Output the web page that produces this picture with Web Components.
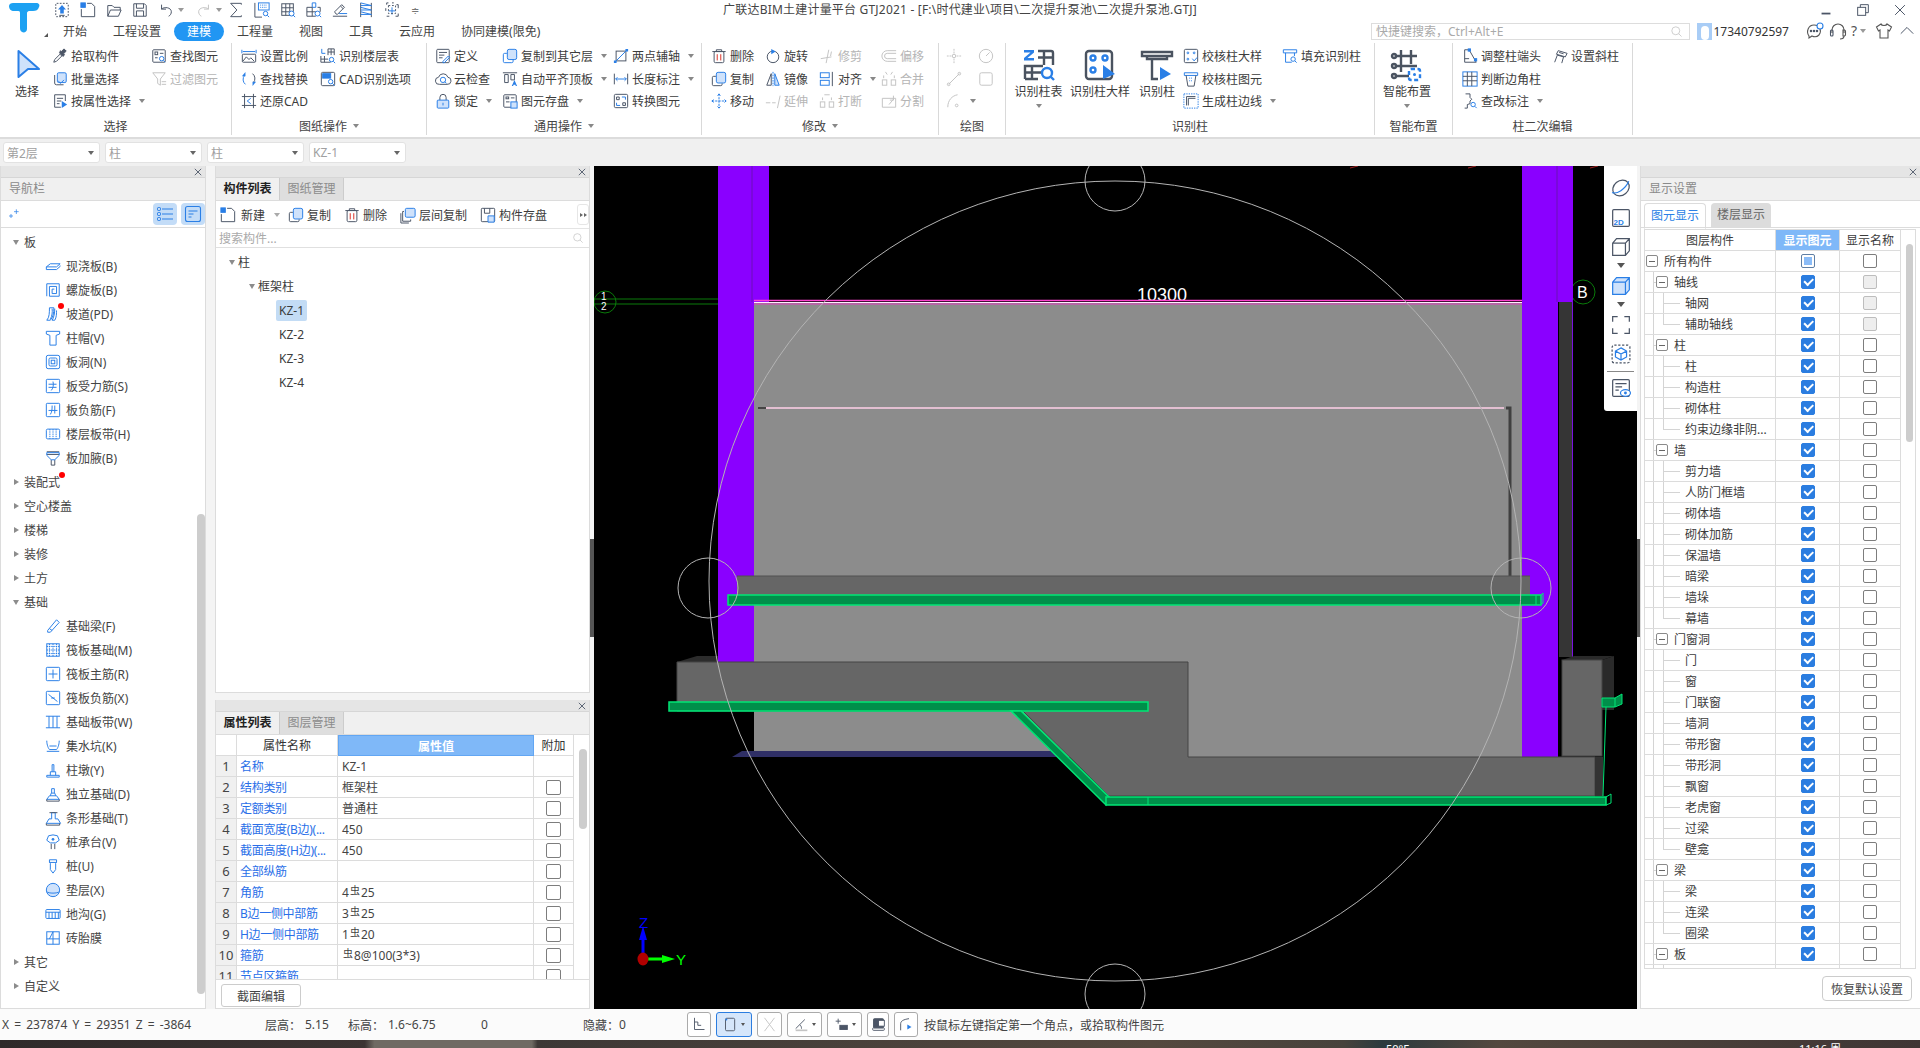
<!DOCTYPE html>
<html lang="zh">
<head>
<meta charset="utf-8">
<title>GTJ2021</title>
<style>
  html, body { margin: 0; height: 100%; overflow: hidden; background: #f0f0f0; }
  body { font: 12px "Noto Sans", "Noto Sans CJK SC", sans-serif; color: #3c3c3c; }
</style>
</head>
<body>
<gtj-app></gtj-app>
<script>
// icon table, all drawn on a 18 box unless a size is passed
const ICONS = {
  pick: '<path d="M2 16l1-3 6-6 2 2-6 6z"/><path class="k" d="M8.5 5.5l4 4 1.5-2-1-1 3-3-2.500-2.500-3 3-1-1z"/>',
  batch: '<rect class="l" x="6" y="2" width="10" height="11" rx="1.500"/><path d="M3 4.500v9a2 2 0 0 0 2 2h8"/><path class="b" d="M7 11l2.500 3 4-4"/>',
  attr: '<path d="M15 9V2H3v14h7"/><path d="M5.500 6h7M5.500 9h5M5.500 12h3"/><path class="f" d="M11 9l6 4-6 4z"/>',
  find: '<rect x="2" y="2" width="14" height="14" rx="1"/><rect x="4.500" y="4.500" width="3" height="3"/><path d="M10 6h4M4.500 11h3"/><circle class="b" cx="12" cy="12" r="2.500"/><path class="b" d="M14 14l2 2"/>',
  filter: '<path class="g" d="M2 2h14l-5.500 7v7l-3-2V9z"/><path class="g" d="M12 12h5M12 15h5"/>',
  scale: '<path class="b" d="M1 2v4M17 2v4M2 4h14"/><rect x="1.500" y="7" width="15" height="9" rx="1"/><path d="M2 15l4-5 3 3 2-2 4 4"/>',
  floor: '<path class="b" d="M2 1v5h4"/><path d="M9 1h7v7M12.500 1v7M9 4.500h7M9 1v7M1 9v7h11M1 12.500h8M5 9v7"/><circle class="b" cx="13" cy="13" r="2.500"/><path class="b" d="M15 15l2 2"/>',
  replace: '<path class="b" d="M4 5a7 7 0 0 0 1 10"/><path d="M14 13a7 7 0 0 0-1-10"/><path class="f" d="M5 1v5H1zM13 17v-5h4z"/>',
  cadopt: '<rect x="1.500" y="1.500" width="15" height="15" rx="1.500"/><rect class="fb" x="3" y="3" width="9" height="5"/><circle class="b" cx="12" cy="12" r="2.500"/><path class="b" d="M14 14l2.500 2.500"/>',
  restore: '<path d="M4 1v16M14 1v16M1 4h16M1 14h16"/><path class="b" d="M11 6L7 9l4 3"/>',
  define: '<rect x="2" y="1.500" width="14" height="15" rx="1"/><path d="M4.500 5h9M4.500 8h6M4.500 11h4"/><path class="b" d="M9 15l6-6 1.500 1.500-6 6H9z"/>',
  cloud: '<path d="M5 15a4 4 0 0 1-1-8 5.500 5.500 0 0 1 10.500 0 4 4 0 0 1-1 8z"/><circle class="b" cx="9" cy="10" r="3"/><path class="b" d="M11 12l2 2"/>',
  lock: '<path d="M5.500 8V5a3.500 3.500 0 0 1 7 0v3"/><rect class="l" x="2.500" y="8" width="13" height="9" rx="1"/><path class="b" d="M9 11v3"/>',
  copylayer: '<rect class="l" x="6" y="1.500" width="10.500" height="11.500" rx="2"/><path class="b" d="M5.500 6H3a1.500 1.500 0 0 0-1.500 1.500V15A1.500 1.500 0 0 0 3 16.500h8a1.500 1.500 0 0 0 1.500-1.500v-2"/>',
  aligntop: '<path d="M1 2h16"/><path d="M3 4h4v9H3zM10 4h4v6h-4z"/><path class="f" d="M11 17l3-7 3 7h-1.500l-.5-1.500h-2L12.500 17z"/>',
  savegrid: '<rect x="2" y="2" width="14" height="14" rx="1"/><rect x="4.500" y="4.500" width="3" height="2"/><path d="M10 5.500h4M4.500 10h4"/><rect class="l" x="10" y="10" width="7" height="7"/>',
  twoaxis: '<rect x="3.500" y="3.500" width="11" height="11"/><path class="b" d="M2 16L16 2"/><path class="f" d="M1 14h3v3H1zM14 1h3v3h-3z"/>',
  len: '<path d="M1.500 3v12M16.500 3v12"/><path class="b" d="M3 9h12M5 7L3 9l2 2M13 7l2 2-2 2"/>',
  conv: '<rect x="1.500" y="1.500" width="15" height="15" rx="1.500"/><path d="M4 4.500h3v3H4zM11 11h3v3h-3z"/><path class="b" d="M10 4.500h4v3M8 14H4v-3"/>',
  del: '<path d="M1.500 4h15M6 4V2h6v2"/><rect x="3.500" y="4" width="11" height="12.500" rx="1.500"/><path class="r" d="M7 7v7M11 7v7"/>',
  rotate: '<circle cx="9" cy="10" r="6.500"/><path class="f" d="M7 1l5 3-5 3z"/>',
  trim: '<path class="g" d="M2 12l12-2M11 2l-3 15M14 4l-1 5"/>',
  offset: '<path class="g" d="M17 3H7a6 6 0 0 0 0 12h10M17 6H7a3 3 0 0 0 0 6h10"/>',
  copy: '<rect class="l" x="6" y="1.500" width="10.500" height="12" rx="2"/><path d="M5.500 6H3a1.500 1.500 0 0 0-1.500 1.500V15A1.500 1.500 0 0 0 3 16.500h8a1.500 1.500 0 0 0 1.500-1.500v-1"/>',
  mirror: '<path d="M7 3L2 16h5z"/><path class="l" d="M11 3l5 13h-5z"/><path class="b" d="M9 1v16" stroke-dasharray="2 1"/>',
  alignb: '<rect class="b" x="1.500" y="2" width="10" height="5.500"/><rect class="b" x="1.500" y="10.500" width="10" height="5.500"/><path d="M15 1v16"/>',
  merge: '<path class="g" d="M3 8V5M15 8V5M5 1l2 3M13 1l-2 3"/><rect class="g" x="1.500" y="10" width="5" height="6"/><rect class="g" x="11.500" y="10" width="5" height="6"/>',
  move: '<path class="b" d="M9 1v16M1 9h16M9 1L7 3.500M9 1l2 2.500M9 17l-2-2.500M9 17l2-2.500M1 9l2.500-2M1 9l2.500 2M17 9l-2.500-2M17 9l-2.500 2" stroke-dasharray="2.500 1.200"/>',
  extend: '<path class="g" d="M1 11h5M8 11h4M17 3l-3 14"/>',
  breakk: '<rect class="g" x="1.500" y="10" width="5" height="6"/><rect class="g" x="11.500" y="10" width="5" height="6"/><path class="g" d="M4 8V5M14 8V5M6 2h6"/>',
  split: '<path class="g" d="M1.500 6v10h15V6zM9 13l5-6M14 3v5h-4"/>',
  dpoint: '<circle class="g" cx="9" cy="9" r="2"/><path class="g" d="M9 1v5M9 12v5M1 9h5M12 9h5" stroke-dasharray="2 1"/>',
  dcircle: '<circle class="g" cx="9" cy="9" r="7.500"/><path class="g" d="M9 9l4-4"/>',
  dline: '<path class="g" d="M3 15L15 3"/><circle class="g" cx="3" cy="15" r="1.500"/><circle class="g" cx="15" cy="3" r="1.500"/>',
  drect: '<rect class="g" x="2" y="2" width="14" height="14" rx="2"/>',
  darc: '<path class="g" d="M2 16C2 8 7 3 13 2"/><circle class="g" cx="12" cy="14" r="1.500"/>',
  colcheck: '<rect x="1.500" y="1.500" width="15" height="15" rx="1.500"/><circle class="b" cx="5.500" cy="5.500" r="1"/><circle class="b" cx="12.500" cy="5.500" r="1"/><circle class="b" cx="5.500" cy="12.500" r="1"/><path class="b" d="M10.500 12l2 2.500 3.500-4"/>',
  colelem: '<path class="b" d="M1.500 2h15v3h-15z"/><path d="M3.500 5l2 12h7l2-12"/><path class="b" d="M7 8h4M7 11h4" stroke-dasharray="1 1"/>',
  coledge: '<rect class="b" x="1" y="1" width="16" height="16" stroke-dasharray="1.500 1.200"/><path d="M4 14V4h10M6 14V6h8"/>',
  fill: '<path class="b" d="M1.500 2h15v3.500h-15zM4 5.500V16h7"/><path class="b" d="M14 5.500V9"/><circle class="b" cx="12.500" cy="12.500" r="2.500"/><path class="b" d="M14.500 14.500l2 2"/>',
  adjust: '<path d="M3 16V2h5l8 14z"/><path d="M3 12h5"/><rect class="fb" x="7" y="1" width="2.500" height="2.500"/><rect class="fb" x="14" y="12" width="2.500" height="2.500"/>',
  slant: '<path d="M3 16l3-8 7 2-2 7M7 3l10 3-2 4-10-3z"/><path d="M8 5l5 1.500"/>',
  judge: '<rect class="b" x="1" y="1" width="16" height="16"/><path d="M1 6h16M1 11h16M6 1v16M11 1v16"/>',
  review: '<path d="M4 1h5v4l2 2-2 2v3l-3 1 0 4H3"/><circle class="b" cx="12.500" cy="13" r="2.500"/><path class="b" d="M14.500 15l2 2"/>',
  // nav
  slab: '<path class="b" d="M1.500 10L6 6.500h11L13 10zM1.500 10v3H13l4-3.500v-1"/>',
  spiral: '<path class="b" d="M2 16V2h14v14H5V5h8v8H8V8h2.500"/>',
  ramp: '<path class="b" d="M5 2h5c0 6-1 11-4 14H2c3-3 3-9 3-14zM8 3c.5 4 0 8-2 12M11 3c0 5-1 10-3 13h3c2-3 2-8 2-11"/>',
  cap: '<path class="b" d="M1.500 1.500h15v3l-4 1.500v11H5.500V6l-4-1.500z"/>',
  hole: '<rect class="b" x="1.500" y="1.500" width="15" height="15" rx="2"/><rect class="b" x="4.500" y="4.500" width="9" height="9" rx="1.500"/><rect class="b" x="7" y="7" width="4" height="4"/>',
  bar: '<rect class="b" x="1.500" y="1.500" width="15" height="15" rx="1"/><path class="b" d="M4 7h9M4 10.500h9M9 4c1 4 0 8-2 10"/>',
  negbar: '<rect class="b" x="1.500" y="1.500" width="15" height="15" rx="1"/><path class="b" d="M4 9.500h10M8 4c0 4 0 7-2 10M11 4v9"/>',
  strip: '<rect class="b" x="1.500" y="3.500" width="15" height="11" rx="1.500"/><path class="b" d="M5.500 3.500v11M12.500 3.500v11M9 3.500v11" stroke-dasharray="1.500 1"/>',
  haunch: '<path d="M2 2h14M2 5h14M7 11v6M11 11v6M7 17h4"/><path class="b" d="M2 3h14v3l-5 5H7L2 6z"/>',
  beam: '<path class="b" d="M3 14L13 2l3 3L6 16H3z"/><path class="b" d="M5 12l3 2"/>',
  raft: '<rect class="b" x="2" y="2" width="14" height="14"/><path class="b" d="M5 2v14M9 2v14M13 2v14M2 5h14M2 9h14M2 13h14" stroke-dasharray="1.500 1"/>',
  raftm: '<rect class="b" x="1.500" y="1.500" width="15" height="15" rx="1"/><path class="b" d="M9 4v10M4 9h10"/>',
  raftn: '<rect class="b" x="1.500" y="1.500" width="15" height="15" rx="1"/><path class="b" d="M4 5l10 8M7 9h4"/>',
  raftb: '<path class="b" d="M1 2.500h16M1 15.500h16M4.500 2.500v13M9 2.500v13M13.500 2.500v13"/>',
  pit: '<path class="b" d="M2 3c0 5 2 9 3 10h8c1-1 3-5 3-10M2 15h14"/><path class="b" d="M5 9h8"/>',
  pier: '<path class="b" d="M2 15h14v2H2zM6 15v-4h6v4M8 11V3h2v8"/>',
  ftg: '<path class="b" d="M2 15l3-4h8l3 4zM6 11l1-3h4l1 3M7.500 8V3h3v5"/><path d="M2 15v2h14v-2"/>',
  stripf: '<path class="b" d="M1.500 15l3-5h3V3h4v7h3l3 5z"/><path d="M1.500 15v2h15v-2M5 3h9"/>',
  pcap: '<path class="b" d="M4 2l5-1 5 1 2 5-4 3H6L2 7z"/><path d="M7 11v6M11 11v6"/><circle class="f" cx="9" cy="6" r="1.500"/>',
  pile: '<path class="b" d="M5 2h8v3l-1 1v7l-3 4-3-4V6L5 5zM5 5h8"/>',
  cush: '<ellipse class="l" cx="9" cy="9" rx="7.500" ry="7.500"/><path class="b" d="M2 11c2 2 12 2 14 0"/>',
  trench: '<rect class="b" x="1" y="4" width="16" height="10" rx="1"/><path class="b" d="M1 7h16M4.500 7v7M8 7v7M11.500 7v7M15 7v7"/>',
  brick: '<rect class="b" x="2" y="2" width="14" height="14"/><path class="b" d="M9 2v14M2 10h14M5 10l4-8"/>',
  // list toolbar
  newf: '<rect class="fb" x="1" y="1" width="5" height="5"/><path d="M1.500 8v8.500h15V5l-3.500-3.500H8"/>',
  levcopy: '<rect class="l" x="6" y="1.500" width="11" height="10" rx="1.500"/><path d="M4.500 5H3v11h9v-2M1 7v11h9"/>',
  listsave: '<rect x="1.500" y="1.500" width="15" height="15" rx="1"/><path d="M5 1.500V7h6V1.500"/><path class="l" d="M9 10h7v7H9z"/>',
  // side tools
  orbit: '<ellipse cx="9" cy="9" rx="6.500" ry="8" transform="rotate(50 9 9)"/><path class="b" d="M1 13c4 2 12-3 15-10"/>',
  two: '<rect x="1.500" y="1.500" width="15" height="15" rx="1"/>',
  cube: '<path d="M1.500 5.500L5 1.500h11.500v11l-3.500 4H1.500zM1.500 5.500H13v11M13 5.500l3.500-4"/>',
  cubeb: '<path class="l" d="M1.500 5.500L5 1.500h11.500v11l-3.500 4H1.500zM1.500 5.500H13v11M13 5.500l3.500-4"/>',
  frame: '<path d="M1.500 6V1.500H6M12 1.500h4.500V6M16.500 12v4.500H12M6 16.500H1.500V12"/>',
  hexa: '<rect x="1" y="1" width="16" height="16" rx="2" stroke-dasharray="2 1.500"/><path class="b" d="M9 3.500l5 2.800v5.400l-5 2.800-5-2.800V6.300zM4 6.300l5 2.800 5-2.800M9 9.100v5.400"/>',
  listeye: '<rect x="1.500" y="1.500" width="15" height="15" rx="1"/><path d="M4 5h10M4 8h6M4 11h3"/><ellipse class="wb" cx="13" cy="13.500" rx="4.500" ry="3"/><circle class="f" cx="13" cy="13.500" r="1.300"/>',
  // status bar
  s1: '<path d="M3 1v14h12"/><path d="M3 6h4v4h4" />',
  s2: '<rect x="3" y="1.500" width="11" height="15" rx="1.500"/><circle class="f" cx="4" cy="3" r="1.200"/>',
  s3: '<path class="g" d="M3 1l12 16M15 1L3 17"/>',
  s4: '<path d="M2 14L13 3"/><path d="M9 14c0-2-.5-3.500-2-4.500"/><path class="g" d="M2 16h14" stroke-width="2"/>',
  s5: '<path d="M2 5h6M5 2v6"/><rect class="k" x="7" y="10" width="9" height="5"/>',
  s6: '<rect class="k" x="3" y="2" width="12" height="11" rx="1"/><rect x="2" y="13" width="14" height="3" rx="1"/><rect x="9" y="4" width="7" height="7" fill="#fff"/>',
  s7: '<path d="M2 16V8c0-3 3-5 10-6"/><path class="f" d="M10 9l5 3-5 3z"/>',
  // top bar
  up: '<rect x="2" y="1.500" width="14" height="15" rx="1" stroke-dasharray="2 1.500"/><path class="f" d="M9 3.500l4.500 5H11V13H7V8.500H4.500z"/><path d="M6 15h6"/>',
  open: '<path d="M2 16V4h5l2 2h7v3M2 16l3-7h12l-3 7z"/>',
  save: '<path d="M2 2h12l2 2v12H2zM5 2v5h8V2M5 16v-6h8v6"/>',
  undo: '<path d="M4 3v5h5M4 8c3-3 11-2 11 3 0 2-1 4-3 5"/>',
  redo: '<path class="g" d="M14 3v5H9M14 8c-3-3-11-2-11 3 0 2 1 4 3 5"/>',
  sum: '<path d="M15 3V1.500H3L10 9l-7 7.500h12V15"/>',
  q1: '<path d="M1 1v16h8"/><rect class="b" x="5" y="1" width="12" height="8"/><path class="b" d="M7 3.500h8M7 6h8" stroke-dasharray="1 1"/><circle class="b" cx="13" cy="13" r="2.500"/><path class="b" d="M15 15l2 2"/>',
  q2: '<rect x="2" y="2" width="13" height="13"/><path d="M2 6.500h13M2 11h13M6.500 2v13M11 2v13"/><circle class="wb" cx="13" cy="13" r="2.800"/><path class="b" d="M15 15l2 2"/>',
  q3: '<path class="b" d="M7 1h4v5H7z"/><path d="M1 6h6M1 11h14M1 16h10M1 6v10M7 6v10M13 6h3v5"/><circle class="wb" cx="13" cy="13" r="2.800"/><path class="b" d="M15 15l2 2"/>',
  q4: '<path d="M1 16h16"/><path d="M4 13l-1-2L11 3l3 3-8 8zM9.500 4.500l3 3"/><path class="b" d="M8 13h9"/>',
  q5: '<path d="M3 1v16M15 1v16"/><path class="b" d="M3 4h12M3 9h12M3 14h12M3 1l12 3M3 6l12 3M3 11l12 3"/>',
  q6: '<path d="M5 1H3v2M2 7v3M3 16h3M16 7V3h-2M9 1h2" /><path d="M13 16h3v-3"/><path class="b" d="M9 6v8M5 10h8"/><rect x="5" y="4" width="8" height="9" stroke-dasharray="2 2"/>',
  search: '<circle class="g" cx="8" cy="8" r="5.500"/><path class="g" d="M12 12l4 4"/>',
  chat: '<path class="s" d="M3 14C0 10 2 3 8 3c6 0 8 6 5 10-2 2-5 2-7 1l-3 2z"/><circle class="k" cx="5" cy="9" r=".7"/><circle class="k" cx="8" cy="9" r=".7"/><circle class="k" cx="11" cy="9" r=".7"/><circle class="wb" cx="14" cy="4" r="3"/>',
  head: '<path class="s" d="M3 11V8a6 6 0 0 1 12 0v3"/><rect x="1.500" y="8" width="2.500" height="6" rx="1"/><path class="s" d="M14 8h1.500a1.500 1.500 0 0 1 1 1.500v3a1.500 1.500 0 0 1-1 1.500H14zM15 14c0 2-2 3-4 3"/>',
  shirt: '<path class="s" d="M6 2L1.500 5l2 4 1.500-1v8h8V8l1.500 1 2-4L12 2c-.5 2-5.500 2-6 0z"/>',
  chev: '<path d="M2 12l7-7 7 7"/>',
  mini: '<path d="M4 13h10" stroke-width="2"/>',
  rest: '<rect x="3" y="6" width="9" height="9"/><path d="M6 6V3h9v9h-3"/>',
  closex: '<path d="M3.500 3.500l11 11M14.500 3.500l-11 11"/>',
  cross: '<path d="M1 1l8 8M9 1L1 9"/>',
  plus: '<path class="b" d="M3 9v6M0 12h6M11 2v7M7.500 5.500h7"/>',
  listv: '<circle class="wb" cx="3" cy="4" r="1.500"/><circle class="wb" cx="3" cy="9" r="1.500"/><circle class="wb" cx="3" cy="14" r="1.500"/><path class="b" d="M6 4h11M6 9h11M6 14h11"/>',
  listd: '<rect class="b" x="1.500" y="1.500" width="15" height="15" rx="2"/><path class="b" d="M4.500 6h9M4.500 9h5M4.500 12h3"/>',
  // big ones on a 32 box
  bzb: '<path class="f" d="M1 1h10v2.500L4.500 9H11v2.500H1V9l6.500-5.500H1z"/><path class="h" d="M15 2h13a2 2 0 0 1 2 2v12M21 2v14M15 8.500h15M2 30V17h18M2 23.500h16M9 17v13M2 30h13"/><circle class="hb" cx="24" cy="24" r="5"/><path class="hb" d="M27.500 27.500L31 31"/>',
  bcd: '<rect class="h" x="2" y="2" width="26" height="28" rx="3"/><circle class="hb" cx="9" cy="9" r="2.500"/><circle class="hb" cx="21" cy="9" r="2.500"/><circle class="hb" cx="9" cy="21" r="2.500"/><path class="f" d="M19 16l12 9-12 5z"/>',
  bcol: '<path class="h" d="M1 3h30v4H1zM6 7v3h20V7M11 10v20h6"/><path class="f" d="M19 18l11 7-11 6z"/>',
  bgrid: '<path class="h" d="M10 1v22M20 1v14M4 7h22M4 17h22M4 27h14"/><circle class="h" cx="3" cy="7" r="2"/><circle class="h" cx="3" cy="17" r="2"/><circle class="h" cx="3" cy="27" r="2"/><rect class="hb" x="18" y="20" width="11" height="11" rx="2" stroke-dasharray="4 2.500"/><circle class="f" cx="23.500" cy="25.500" r="1.500"/>',
  bsel: '<path class="l" stroke-width="2" d="M7.500 2L28 20H17L7.500 28z" stroke-linejoin="round"/>'
};

class GtjIcon extends HTMLElement {
  connectedCallback() {
    const size = this.getAttribute('size') || 16;
    const box = this.getAttribute('box') || 18;
    this.attachShadow({ mode: 'open' }).innerHTML = `
      <style>
        :host { display: inline-flex; flex: none; width: ${size}px; height: ${size}px; }
        svg { width: 100%; height: 100%; overflow: visible; fill: none; stroke: #4b5566; stroke-width: 1.100; }
        .b { stroke: #2a7fe6; }
        .l { fill: #cfe2fb; stroke: #2a7fe6; }
        .f { fill: #2a7fe6; stroke: none; }
        .fb { fill: #2a7fe6; stroke: #2a7fe6; }
        .g { stroke: #c4c4c4; }
        .r { stroke: #d93025; }
        .k { fill: #4b5566; }
        .s { stroke: #555; }
        .wb { fill: #fff; stroke: #2a7fe6; }
        .h { stroke: #4a5360; stroke-width: 2.400; }
        .hb { stroke: #2a7fe6; stroke-width: 2.400; }
      </style>
      <svg viewBox="0 0 ${box} ${box}">${ICONS[this.getAttribute('name')] || ''}</svg>`;
  }
}
customElements.define('gtj-icon', GtjIcon);

const caret = '<span class="car"></span>';

class RbItem extends HTMLElement {
  connectedCallback() {
    const dim = this.hasAttribute('off');
    this.attachShadow({ mode: 'open' }).innerHTML = `
      <style>
        :host { display: flex; align-items: center; gap: 3px; white-space: nowrap; color: ${dim ? '#b5b5b5' : '#3c3c3c'}; }
        .car { width: 0; height: 0; border: 3px solid transparent; border-top: 4px solid #888; border-bottom: 0; margin-left: 5px; }
      </style>
      <gtj-icon name="${this.getAttribute('icon')}"></gtj-icon><slot></slot>${this.hasAttribute('drop') ? caret : ''}`;
  }
}
customElements.define('rb-item', RbItem);

class RbBig extends HTMLElement {
  connectedCallback() {
    const w = this.getAttribute('w');
    const s = this.getAttribute('s') || 32;
    this.attachShadow({ mode: 'open' }).innerHTML = `
      <style>
        :host { display: flex; flex: none; flex-direction: column; align-items: center; width: ${w}px; white-space: nowrap; }
        .ic { height: 36px; padding-top: 2px; display: flex; align-items: center; }
        .tx { line-height: 17px; }
        .car { width: 0; height: 0; border: 3px solid transparent; border-top: 4px solid #888; border-bottom: 0; margin-top: 4px; }
      </style>
      <div class="ic"><gtj-icon name="${this.getAttribute('icon')}" size="${s}" box="32"></gtj-icon></div>
      <div class="tx"><slot></slot></div>${this.hasAttribute('drop') ? caret : ''}`;
  }
}
customElements.define('rb-big', RbBig);

class RbGroup extends HTMLElement {
  connectedCallback() {
    const cols = this.getAttribute('cols') || 'auto';
    const drop = this.hasAttribute('drop');
    this.attachShadow({ mode: 'open' }).innerHTML = `
      <style>
        :host { display: flex; flex: none; flex-direction: column; box-sizing: border-box; width: ${this.getAttribute('w')}px; height: 92px; margin-top: 2px; border-right: 1px solid #d9d9d9; }
        .body { flex: 1; min-height: 0; display: flex; padding: 2px 0 0 ${this.getAttribute('pad') || 0}px; }
        .cols { display: grid; grid-auto-flow: column; grid-template-rows: repeat(3, 22.500px); grid-template-columns: ${cols}; align-items: center; }
        .lab { flex: none; height: 22px; display: flex; align-items: center; justify-content: center; gap: 6px; margin-bottom: -2px; color: #444; }
        .car { width: 0; height: 0; border: 3.500px solid transparent; border-top: 4px solid #888; border-bottom: 0; }
      </style>
      <div class="body"><slot name="big"></slot><div class="cols"><slot></slot></div></div>
      <div class="lab">${this.getAttribute('label')}${drop ? caret : ''}</div>`;
  }
}
customElements.define('rb-group', RbGroup);

class GtjTitlebar extends HTMLElement {
  connectedCallback() {
    const q = ['up', 'newf', 'open', 'save'];
    const tabs = ['开始', '工程设置', '建模', '工程量', '视图', '工具', '云应用', '协同建模(限免)'];
    this.attachShadow({ mode: 'open' }).innerHTML = `
      <style>
        :host { display: flex; height: 41px; background: #fff; }
        .logo { flex: none; width: 50px; position: relative; }
        .logo svg { display: block; margin: 3px 0 0 8px; }
        .logo i { position: absolute; right: 2px; bottom: 4px; border: 2px solid transparent; border-right-color: #555; border-bottom-color: #555; }
        .col { flex: 1; display: flex; flex-direction: column; min-width: 0; }
        .r1 { height: 21px; display: flex; align-items: flex-start; }
        .quick { flex: none; width: 400px; display: flex; align-items: center; padding: 2px 0 0 4px; box-sizing: border-box; gap: 10px; }
        .t { flex: 1; text-align: center; line-height: 20px; color: #444; white-space: nowrap; letter-spacing: .2px; }
        .win { flex: none; width: 450px; display: flex; justify-content: flex-end; gap: 21px; padding: 2px 12px 0 0; box-sizing: border-box; }
        .d { width: 0; height: 0; border: 3px solid transparent; border-top: 4px solid #999; border-bottom: 0; margin: 0 -4px 0 -6px; }
        .r2 { height: 20px; display: flex; align-items: center; }
        .tab { padding: 0 13px; line-height: 19px; color: #444; white-space: nowrap; }
        .tab.on { background: #2196f3; color: #fff; border-radius: 10px; }
        .sp { flex: 1; }
        .s { flex: none; box-sizing: border-box; width: 319px; height: 17px; border: 1px solid #ddd; display: flex; align-items: center; justify-content: space-between; padding: 0 6px 0 4px; color: #aaa; }
        .u { flex: none; width: 92px; display: flex; align-items: center; margin: 0 0 0 7px; color: #333; }
        .u i { width: 16px; height: 17px; margin-right: 1px; background: #a9cdf6; display: block; position: relative; overflow: hidden; }
        .u i::after { content: ""; position: absolute; left: 4px; top: 3px; width: 8px; height: 14px; background: #fff; border-radius: 4px; }
        .tools { flex: none; display: flex; align-items: center; margin: 0 5px 0 17px; }
        .tools b { width: 8px; font-weight: 400; font-size: 14px; color: #555; line-height: 16px; margin-left: 4px; }
        .tools .d { margin: 0 0 0 1px; }
      </style>
      <div class="logo">
        <svg width="32" height="30" viewBox="0 0 32 30">
          <path d="M1 3c0-2 2-3 4-3h23c3 0 4 2 3 4-1 3-3 4-6 4h-4c-1 0-2 1-2 2v16c0 3-3 4-5 3-2-1-2-3-2-5V10c0-2-1-2-3-2H6C3 8 1 6 1 3z" fill="#1da1f2"/>
        </svg><i></i>
      </div>
      <div class="col">
        <div class="r1">
          <div class="quick">
            ${q.map(n => `<gtj-icon name="${n}"></gtj-icon>`).join('')}
            <gtj-icon name="undo"></gtj-icon><span class="d"></span>
            <gtj-icon name="redo" style="margin-left:6px"></gtj-icon><span class="d"></span>
            ${['sum', 'q1', 'q2', 'q3', 'q4', 'q5', 'q6'].map(n => `<gtj-icon name="${n}"></gtj-icon>`).join('')}
            <span style="color:#777;font-size:10px;margin-left:1px">≑</span>
          </div>
          <div class="t">广联达BIM土建计量平台 GTJ2021 - [F:\\时代建业\\项目\\二次提升泵池\\二次提升泵池.GTJ]</div>
          <div class="win"><gtj-icon name="mini"></gtj-icon><gtj-icon name="rest"></gtj-icon><gtj-icon name="closex"></gtj-icon></div>
        </div>
        <div class="r2">
          ${tabs.map((t, i) => `<span class="tab${i === 2 ? ' on' : ''}">${t}</span>`).join('')}
          <span class="sp"></span>
          <div class="s"><span>快捷键搜索，Ctrl+Alt+E</span><gtj-icon name="search" size="13"></gtj-icon></div>
          <div class="u"><i></i><span>17340792597</span></div>
          <div class="tools">
            <gtj-icon name="chat" size="18"></gtj-icon><gtj-icon name="head" size="18" style="margin-left:5px"></gtj-icon><b>?</b><span class="d"></span><gtj-icon name="shirt" size="18" style="margin-left:9px"></gtj-icon><gtj-icon name="chev" size="16" style="margin-left:6px"></gtj-icon>
          </div>
        </div>
      </div>`;
  }
}
customElements.define('gtj-titlebar', GtjTitlebar);

class GtjRibbon extends HTMLElement {
  connectedCallback() {
    const it = (icon, text, extra = '') => `<rb-item icon="${icon}" ${extra}>${text}</rb-item>`;
    this.attachShadow({ mode: 'open' }).innerHTML = `
      <style>
        :host { display: flex; height: 98px; box-sizing: border-box; background: #fff; border-bottom: 2px solid #dcdcdc; }
      </style>
      <rb-group w="232" label="选择" cols="99px 81px">
        <rb-big slot="big" w="50" icon="bsel" style="margin:0 0 0 2px">选择</rb-big>
        ${it('pick', '拾取构件')}${it('batch', '批量选择')}${it('attr', '按属性选择', 'drop')}
        ${it('find', '查找图元')}${it('filter', '过滤图元', 'off')}
      </rb-group>
      <rb-group w="195" pad="9" label="图纸操作" drop cols="79px auto">
        ${it('scale', '设置比例')}${it('replace', '查找替换')}${it('restore', '还原CAD')}
        ${it('floor', '识别楼层表')}${it('cadopt', 'CAD识别选项')}
      </rb-group>
      <rb-group w="275" pad="8" label="通用操作" drop cols="67px 111px auto">
        ${it('define', '定义')}${it('cloud', '云检查')}${it('lock', '锁定', 'drop')}
        ${it('copylayer', '复制到其它层', 'drop')}${it('aligntop', '自动平齐顶板', 'drop')}${it('savegrid', '图元存盘', 'drop')}
        ${it('twoaxis', '两点辅轴', 'drop')}${it('len', '长度标注', 'drop')}${it('conv', '转换图元')}
      </rb-group>
      <rb-group w="237" pad="9" label="修改" drop cols="54px 54px 62px auto">
        ${it('del', '删除')}${it('copy', '复制')}${it('move', '移动')}
        ${it('rotate', '旋转')}${it('mirror', '镜像')}${it('extend', '延伸', 'off')}
        ${it('trim', '修剪', 'off')}${it('alignb', '对齐', 'drop')}${it('breakk', '打断', 'off')}
        ${it('offset', '偏移', 'off')}${it('merge', '合并', 'off')}${it('split', '分割', 'off')}
      </rb-group>
      <rb-group w="67" pad="7" label="绘图" cols="32px auto">
        ${it('dpoint', '', 'off')}${it('dline', '', 'off')}${it('darc', '', 'off drop')}
        ${it('dcircle', '', 'off')}${it('drect', '', 'off')}
      </rb-group>
      <rb-group w="369" pad="2" label="识别柱" cols="99px auto">
        <rb-big slot="big" w="61" icon="bzb" drop>识别柱表</rb-big>
        <rb-big slot="big" w="62" icon="bcd">识别柱大样</rb-big>
        <rb-big slot="big" w="52" icon="bcol">识别柱</rb-big>
        ${it('colcheck', '校核柱大样')}${it('colelem', '校核柱图元')}${it('coledge', '生成柱边线', 'drop')}
        ${it('fill', '填充识别柱')}
      </rb-group>
      <rb-group w="78" label="智能布置">
        <rb-big slot="big" w="64" icon="bgrid" drop>智能布置</rb-big>
      </rb-group>
      <rb-group w="180" pad="9" label="柱二次编辑" cols="90px auto">
        ${it('adjust', '调整柱端头')}${it('judge', '判断边角柱')}${it('review', '查改标注', 'drop')}
        ${it('slant', '设置斜柱')}
      </rb-group>`;
  }
}
customElements.define('gtj-ribbon', GtjRibbon);

class GtjSelects extends HTMLElement {
  connectedCallback() {
    const v = ['第2层', '柱', '柱', 'KZ-1'];
    this.attachShadow({ mode: 'open' }).innerHTML = `
      <style>
        :host { display: flex; height: 27px; box-sizing: border-box; padding: 3px 0 0 3px; gap: 5px; background: #f0f0f0; }
        div { box-sizing: border-box; width: 97px; height: 21px; background: #fff; border: 1px solid #e2e2e2; border-radius: 3px; display: flex; align-items: center; justify-content: space-between; padding: 0 5px 0 3px; color: #a0a0a0; }
        i { border: 3px solid transparent; border-top: 4px solid #666; border-bottom: 0; }
      </style>
      ${v.map(t => `<div>${t}<i></i></div>`).join('')}`;
  }
}
customElements.define('gtj-selects', GtjSelects);

// shared shell of a docked panel: thin strip with the close cross, then the content
class GtjPanel extends HTMLElement {
  connectedCallback() {
    this.attachShadow({ mode: 'open' }).innerHTML = `
      <style>
        :host { display: flex; flex-direction: column; box-sizing: border-box; background: #fff; border: 1px solid #dcdcdc; border-top: 0; min-height: 0; overflow: hidden; }
        .strip { flex: none; height: 11px; background: #e5e5e5; border-bottom: 1px solid #d6d6d6; display: flex; justify-content: flex-end; align-items: center; padding-right: 3px; }
        .body { flex: 1; min-height: 0; display: flex; flex-direction: column; position: relative; }
      </style>
      <div class="strip"><gtj-icon name="cross" size="8" box="10"></gtj-icon></div>
      <div class="body"><slot></slot></div>`;
  }
}
customElements.define('gtj-panel', GtjPanel);

const NAV = [
  ['板', 1], ['现浇板(B)', 0, 'slab'], ['螺旋板(B)', 0, 'spiral'], ['坡道(PD)', 0, 'ramp', 1], ['柱帽(V)', 0, 'cap'], ['板洞(N)', 0, 'hole'],
  ['板受力筋(S)', 0, 'bar'], ['板负筋(F)', 0, 'negbar'], ['楼层板带(H)', 0, 'strip'], ['板加腋(B)', 0, 'haunch'],
  ['装配式', 2, '', 1], ['空心楼盖', 2], ['楼梯', 2], ['装修', 2], ['土方', 2], ['基础', 1],
  ['基础梁(F)', 0, 'beam'], ['筏板基础(M)', 0, 'raft'], ['筏板主筋(R)', 0, 'raftm'], ['筏板负筋(X)', 0, 'raftn'], ['基础板带(W)', 0, 'raftb'],
  ['集水坑(K)', 0, 'pit'], ['柱墩(Y)', 0, 'pier'], ['独立基础(D)', 0, 'ftg'], ['条形基础(T)', 0, 'stripf'], ['桩承台(V)', 0, 'pcap'], ['桩(U)', 0, 'pile'],
  ['垫层(X)', 0, 'cush'], ['地沟(G)', 0, 'trench'], ['砖胎膜', 0, 'brick'], ['其它', 2], ['自定义', 2]
];

class GtjNav extends HTMLElement {
  connectedCallback() {
    const rows = NAV.map(([t, k, ic, dot]) => k
      ? `<div class="r top"><i class="${k === 1 ? 'dn' : 'rt'}"></i><span class="tx">${t}${dot ? '<u></u>' : ''}</span></div>`
      : `<div class="r leaf"><span class="ic"><gtj-icon name="${ic}" size="16"></gtj-icon>${dot ? '<u></u>' : ''}</span>${t}</div>`).join('');
    this.attachShadow({ mode: 'open' }).innerHTML = `
      <style>
        :host { display: flex; flex-direction: column; flex: 1; min-height: 0; position: relative; }
        .ttl { height: 22px; background: #f0f0f0; line-height: 22px; padding-left: 8px; color: #8a8a8a; border-bottom: 1px solid #dcdcdc; }
        .bar { height: 27px; box-sizing: border-box; display: flex; align-items: center; padding: 0 0 0 8px; border-bottom: 1px solid #dcdcdc; gap: 4px; }
        .bar span { width: 24px; height: 22px; background: #c3dcf7; border-radius: 4px; display: flex; align-items: center; justify-content: center; }
        .tree { padding-top: 2px; flex: 1; color: #444; }
        .r { height: 24px; display: flex; align-items: center; white-space: nowrap; }
        .top { padding-left: 12px; }
        .tx { margin-left: 5px; position: relative; }
        .leaf { padding-left: 44px; }
        .ic { width: 21px; display: flex; position: relative; }
        u { position: absolute; width: 6px; height: 6px; border-radius: 50%; background: #f00; right: -5px; top: -1px; }
        .ic u { right: 2px; top: -3px; }
        .dn { width: 0; height: 0; border: 3.500px solid transparent; border-top: 5px solid #8c8c8c; border-bottom: 0; }
        .rt { width: 0; height: 0; margin-left: 1px; border: 3.500px solid transparent; border-left: 5px solid #8c8c8c; border-right: 0; }
        .thumb { position: absolute; right: 0; top: 336px; width: 8px; height: 480px; background: #cdcdcd; border-radius: 4px; }
      </style>
      <div class="ttl">导航栏</div>
      <div class="bar"><gtj-icon name="plus" size="12"></gtj-icon><span style="margin-left:auto"><gtj-icon name="listv" size="18"></gtj-icon></span><span><gtj-icon name="listd" size="18"></gtj-icon></span></div>
      <div class="tree">${rows}</div>
      <div class="thumb"></div>`;
  }
}
customElements.define('gtj-nav', GtjNav);

const tabStyle = `
  .tabs { flex: none; height: 22px; display: flex; background: #f0f0f0; border-bottom: 1px solid #dcdcdc; }
  .tabs b { width: 64px; box-sizing: border-box; text-align: center; line-height: 22px; font-weight: 400; border-right: 1px solid #ccc; }
  .tabs .on { background: #f0f0f0; color: #222; font-weight: 700; }
  .tabs .off { background: #dedede; color: #8c8c8c; }`;

class GtjList extends HTMLElement {
  connectedCallback() {
    this.attachShadow({ mode: 'open' }).innerHTML = `
      <style>
        :host { display: flex; flex-direction: column; flex: 1; min-height: 0; color: #3c3c3c; }
        ${tabStyle}
        .tool { flex: none; height: 28px; box-sizing: border-box; display: flex; align-items: center; padding-left: 4px; border-bottom: 1px solid #e4e4e4; position: relative; }
        .tool span { display: flex; align-items: center; gap: 3px; white-space: nowrap; }
        .more { position: absolute; right: 0; top: 3px; width: 10px; height: 19px; border: 1px solid #e6e6e6; border-radius: 3px; display: flex; align-items: center; justify-content: center; gap: 1px; }
        .more i { border: 2.500px solid transparent; border-left: 3px solid #666; border-right: 0; }
        .car { width: 0; height: 0; border: 3px solid transparent; border-top: 4px solid #aaa; border-bottom: 0; margin-left: 6px; }
        .find { flex: none; height: 18px; display: flex; align-items: center; justify-content: space-between; padding: 0 5px 0 3px; color: #aaa; border-bottom: 1px solid #e0e0e0; }
        .tree { flex: 1; padding-top: 2px; }
        .r { height: 24px; display: flex; align-items: center; gap: 3px; }
        .dn { width: 0; height: 0; border: 3.500px solid transparent; border-top: 5px solid #8c8c8c; border-bottom: 0; }
        .k { padding-left: 57px; }
        .k em { font-style: normal; padding: 0 3px; line-height: 21px; border-radius: 2px; margin-left: 3px; }
        .k .on { background: #c3dcf5; }
      </style>
      <div class="tabs"><b class="on">构件列表</b><b class="off">图纸管理</b></div>
      <div class="tool">
        <span><gtj-icon name="newf"></gtj-icon><span style="margin-left:2px">新建</span><span class="car" style="margin-right:8px"></span></span>
        <span style="margin-right:13px"><gtj-icon name="copy"></gtj-icon> 复制</span>
        <span style="margin-right:13px"><gtj-icon name="del"></gtj-icon> 删除</span>
        <span style="margin-right:13px"><gtj-icon name="levcopy"></gtj-icon> 层间复制</span>
        <span><gtj-icon name="listsave"></gtj-icon> 构件存盘</span>
        <div class="more"><i></i><i></i></div>
      </div>
      <div class="find"><span>搜索构件...</span><gtj-icon name="search" size="12"></gtj-icon></div>
      <div class="tree">
        <div class="r" style="padding-left:13px"><i class="dn"></i><span>柱</span></div>
        <div class="r" style="padding-left:33px"><i class="dn"></i><span>框架柱</span></div>
        <div class="r k"><em class="on">KZ-1</em></div>
        <div class="r k"><em>KZ-2</em></div>
        <div class="r k"><em>KZ-3</em></div>
        <div class="r k"><em>KZ-4</em></div>
      </div>`;
  }
}
customElements.define('gtj-list', GtjList);

const PROPS = [
  ['名称', 'KZ-1', 1], ['结构类别', '框架柱'], ['定额类别', '普通柱'], ['截面宽度(B边)(...', '450'], ['截面高度(H边)(...', '450'], ['全部纵筋', ''],
  ['角筋', '4<sup>虫</sup>25'], ['B边一侧中部筋', '3<sup>虫</sup>25'], ['H边一侧中部筋', '1<sup>虫</sup>20'], ['箍筋', '<sup>虫</sup>8@100(3*3)'], ['节点区箍筋', '']
];

class GtjProps extends HTMLElement {
  connectedCallback() {
    const rows = PROPS.map(([n, v, nobox], i) => `
      <div class="i">${i + 1}</div><div class="n">${n}</div><div class="v"><span>${v}</span></div>
      <div class="a">${nobox ? '' : '<span class="cb"></span>'}</div>`).join('');
    this.attachShadow({ mode: 'open' }).innerHTML = `
      <style>
        :host { display: flex; flex-direction: column; flex: 1; min-height: 0; }
        ${tabStyle}
        .wrap { flex: none; height: 244px; display: flex; overflow: hidden; border-bottom: 1px solid #dcdcdc; }
        .g { flex: none; display: grid; grid-template-columns: 21px 101px 196px 40px; grid-auto-rows: 21px; }
        .g > div { box-sizing: border-box; border-right: 1px solid #dcdcdc; border-bottom: 1px solid #dcdcdc; display: flex; align-items: center; white-space: nowrap; overflow: hidden; }
        .h { justify-content: center; color: #333; }
        .h.on { background: #7fb8f8; color: #fff; font-weight: 700; border: 1px solid #62a6f3 !important; }
        .i { background: #f0f0f0; justify-content: center; color: #444; font-size: 13px; }
        .n { color: #2a6fe8; padding-left: 3px; letter-spacing: -.3px; }
        .v { padding-left: 4px; color: #444; }
        .a { justify-content: center; }
        sup { font-size: 10px; line-height: 0; vertical-align: 3px; margin: 0 1px; }
        .cb { width: 13px; height: 13px; border: 1px solid #7d7d7d; border-radius: 2px; }
        .sb { flex: 1; position: relative; }
        .sb i { position: absolute; left: 5px; top: 14px; width: 8px; height: 80px; background: #cdcdcd; border-radius: 4px; }
        .foot { flex: 1; padding: 4px 0 0 5px; }
        button { width: 80px; height: 23px; background: #fff; border: 1px solid #ccc; border-radius: 3px; font: inherit; color: #444; padding: 0; }
      </style>
      <div class="tabs"><b class="on">属性列表</b><b class="off">图层管理</b></div>
      <div class="wrap">
        <div class="g">
          <div></div><div class="h">属性名称</div><div class="h on">属性值</div><div class="h">附加</div>
          ${rows}
        </div>
        <div class="sb"><i></i></div>
      </div>
      <div class="foot"><button>截面编辑</button></div>`;
  }
}
customElements.define('gtj-props', GtjProps);

// level, name, name-checkbox state (0 empty, 1 greyed)
const LAYERS = [
  [0, '所有构件'], [1, '轴线', 1], [2, '轴网', 1], [3, '辅助轴线', 1], [1, '柱'], [2, '柱'], [2, '构造柱'], [2, '砌体柱'], [3, '约束边缘非阴...'],
  [1, '墙'], [2, '剪力墙'], [2, '人防门框墙'], [2, '砌体墙'], [2, '砌体加筋'], [2, '保温墙'], [2, '暗梁'], [2, '墙垛'], [3, '幕墙'],
  [1, '门窗洞'], [2, '门'], [2, '窗'], [2, '门联窗'], [2, '墙洞'], [2, '带形窗'], [2, '带形洞'], [2, '飘窗'], [2, '老虎窗'], [2, '过梁'], [3, '壁龛'],
  [1, '梁'], [2, '梁'], [2, '连梁'], [3, '圈梁'], [1, '板'], [2, '']
];

class GtjDisplay extends HTMLElement {
  connectedCallback() {
    const rows = LAYERS.map(([lv, name, grey], i) => `
      <div class="c0 lv${lv}">${lv < 2 ? '<span class="mm"></span>' : ''}<span>${name}</span></div>
      <div class="c">${i === 0 ? '<span class="cb part"><i></i></span>' : '<span class="cb on"></span>'}</div>
      <div class="c"><span class="cb${grey ? ' grey' : ''}"></span></div>`).join('');
    this.attachShadow({ mode: 'open' }).innerHTML = `
      <style>
        :host { display: flex; flex-direction: column; flex: 1; min-height: 0; color: #3c3c3c; }
        .ttl { flex: none; height: 22px; background: #f0f0f0; line-height: 22px; padding-left: 8px; color: #8a8a8a; border-bottom: 1px solid #dcdcdc; }
        .tabs { flex: none; height: 27px; box-sizing: border-box; padding: 2px 0 0 3px; display: flex; gap: 4px; border-bottom: 1px solid #dcdcdc; }
        .tabs b { width: 61px; font-weight: 400; text-align: center; line-height: 24px; border-radius: 4px 4px 0 0; }
        .tabs .on { color: #2a7fe6; border: 1px solid #dcdcdc; border-bottom: 1px solid #fff; height: 24px; box-sizing: content-box; width: 60px; line-height: 23px; }
        .tabs .off { background: #dcdcdc; color: #666; width: 60px; margin-left: 1px; }
        .box { flex: none; height: 740px; margin: 1px 4px 0 3px; border: 1px solid #dcdcdc; display: flex; overflow: hidden; box-sizing: border-box; }
        .g { flex: none; display: grid; grid-template-columns: 130px 64px 62px; grid-auto-rows: 21px; }
        .g > div { box-sizing: border-box; border-bottom: 1px solid #dcdcdc; display: flex; align-items: center; white-space: nowrap; overflow: hidden; }
        .c, .hd { border-left: 1px solid #dcdcdc; justify-content: center; }
        .hd.first { border-left: 0; }
        .hd.on { background: #7fb8f8; color: #fff; font-weight: 700; }
        .c:nth-child(3n), .hd:nth-child(3) { border-right: 1px solid #dcdcdc; }
        .mm { flex: none; box-sizing: border-box; width: 12px; height: 12px; border: 1px solid #8a8a8a; border-radius: 2px; background: #fff linear-gradient(#666,#666) center/6px 1px no-repeat; margin-right: 6px; }
        .lv0 { padding-left: 1px; }
        .lv1 { padding-left: 11px; background: linear-gradient(#d4d4d4,#d4d4d4) 8px 0/1px 100% no-repeat, linear-gradient(#d4d4d4,#d4d4d4) 8px 10px/4px 1px no-repeat; }
        .lv2, .lv3 { padding-left: 40px; }
        .lv2 { background: linear-gradient(#d4d4d4,#d4d4d4) 8px 0/1px 100% no-repeat, linear-gradient(#d4d4d4,#d4d4d4) 18px 0/1px 100% no-repeat, linear-gradient(#d4d4d4,#d4d4d4) 18px 10px/17px 1px no-repeat; }
        .lv3 { background: linear-gradient(#d4d4d4,#d4d4d4) 8px 0/1px 100% no-repeat, linear-gradient(#d4d4d4,#d4d4d4) 18px 0/1px 50% no-repeat, linear-gradient(#d4d4d4,#d4d4d4) 18px 10px/17px 1px no-repeat; }
        .cb { box-sizing: border-box; width: 14px; height: 14px; border-radius: 2px; border: 1px solid #7d7d7d; background: #fff; display: block; position: relative; }
        .cb.grey { background: #eee; border-color: #bdbdbd; }
        .cb.part { border-color: #5f7fa5; }
        .cb.part i { position: absolute; left: 2px; top: 2px; width: 8px; height: 8px; background: #8bbcf7; }
        .cb.on { background: #2b7de0; border-color: #2b7de0; }
        .cb.on::after { content: ""; position: absolute; left: 2.500px; top: 2px; width: 7px; height: 3.500px; border-left: 2px solid #fff; border-bottom: 2px solid #fff; transform: rotate(-45deg); }
        .sb { flex: 1; position: relative; }
        .sb i { position: absolute; left: 5px; top: 14px; width: 7px; height: 198px; background: #cdcdcd; border-radius: 4px; }
        .foot { flex: 1; display: flex; justify-content: flex-end; align-items: flex-start; padding: 7px 8px 0 0; }
        button { width: 90px; height: 25px; background: #fff; border: 1px solid #ccc; border-radius: 4px; font: inherit; color: #444; padding: 0; }
      </style>
      <div class="ttl">显示设置</div>
      <div class="tabs"><b class="on">图元显示</b><b class="off">楼层显示</b></div>
      <div class="box">
        <div class="g">
          <div class="hd first">图层构件</div><div class="hd on">显示图元</div><div class="hd">显示名称</div>
          ${rows}
        </div>
        <div class="sb"><i></i></div>
      </div>
      <div class="foot"><button>恢复默认设置</button></div>`;
  }
}
customElements.define('gtj-display', GtjDisplay);

// drawing area; the svg viewBox is in page coordinates so the model reads against the screenshot
class GtjView extends HTMLElement {
  connectedCallback() {
    const beam = (x, y, w, h) => `<rect x="${x}" y="${y}" width="${w}" height="${h}" fill="#008f4a" stroke="#00e676" stroke-width="1.500"/>`;
    this.attachShadow({ mode: 'open' }).innerHTML = `
      <style>
        :host { display: block; flex: none; width: 1043px; position: relative; background: #000; overflow: hidden; }
        svg.m { display: block; width: 100%; height: 100%; }
        .side { position: absolute; right: 0; top: 0; width: 33px; height: 245px; box-sizing: border-box; background: #fff; border-radius: 0 0 0 3px; display: flex; flex-direction: column; align-items: center; padding-top: 11px; }
        .side gtj-icon { margin: 1px 0; }
        .side i { width: 0; height: 0; border: 4px solid transparent; border-top: 5px solid #555; border-bottom: 0; margin: 5px 0 7px; }
        .side hr { width: 27px; margin: 6px 0 5px; border: 0; border-top: 1px solid #888; }
        .two { position: relative; height: 22px; }
        .two span { position: absolute; left: 3px; top: 11px; font: 700 8px "Liberation Sans", sans-serif; color: #2a7fe6; }
        .gap { height: 8px; flex: none; }
        .gap.s { height: 7px; }
      </style>
      <svg class="m" viewBox="594 166 1043 843">
        <!-- axis marks -->
        <path d="M594 299H718M594 304H718" stroke="#0a7a0a"/>
        <circle cx="605" cy="302" r="11" fill="none" stroke="#0a7a0a"/>
        <text x="601" y="300" font-size="10" fill="#fff" font-family="Liberation Sans">1</text>
        <text x="601" y="310" font-size="10" fill="#fff" font-family="Liberation Sans">2</text>
        <circle cx="1583" cy="292" r="12" fill="none" stroke="#0a7a0a"/>
        <text x="1577" y="298" font-size="16" fill="#fff" font-family="Liberation Sans">B</text>
        <text x="1137" y="301" font-size="18" fill="#fff" font-family="Liberation Sans">10300</text>
        <path d="M1350 168l8-2M1468 168l8-2M1590 168l8-2" stroke="#a02020"/>
        <!-- columns -->
        <path d="M718 166H769V302H754V662H718z" fill="#8a00ff"/>
        <path d="M752 166V302" stroke="#6a10b8"/>
        <path d="M1522 166H1573V302H1558V757H1522z" fill="#8a00ff"/>
        <path d="M1557 166V302" stroke="#6a10b8"/>
        <path d="M1559 302H1572V657H1559z" fill="#353535"/>
        <path d="M1572.500 300V657" stroke="#7a10e0"/>
        <!-- wall -->
        <rect x="754" y="302" width="768" height="455" fill="#8c8c8c"/>
        <path d="M754 300.500H1522" stroke="#ff40d0" stroke-width="1.500"/>
        <path d="M754 302.500H1522" stroke="#fff0ff"/>
        <path d="M754 304H1522" stroke="#e040c0"/>
        <path d="M760 408H1504" stroke="#ffd0e8" stroke-width="1.500"/>
        <path d="M758 408H766" stroke="#444" stroke-width="2"/>
        <path d="M1506 408H1510V576" fill="none" stroke="#404040" stroke-width="3"/>
        <!-- slab bands -->
        <path d="M737 576H1530V595H737z" fill="#666"/>
        <path d="M737 576H1530" stroke="#505050"/>
        <path d="M677 662L697 656H718V662z" fill="#2c2c2c"/>
        <path d="M677 662H1188V757H1595V796H1109L1023 711H677z" fill="#666" stroke="#444"/>
        <path d="M732 757L742 751H1055L1059 757z" fill="#2f2f66"/>
        <!-- right stub -->
        <path d="M1595 757H1603V796H1595z" fill="#333"/>
        <path d="M1602 660L1614 656V710H1602z" fill="#2a2a2a"/>
        <path d="M1562 660L1574 656H1614L1602 660z" fill="#2a2a2a"/>
        <rect x="1562" y="660" width="40" height="96" fill="#666" stroke="#444"/>
        <!-- beams -->
        ${beam(728, 595, 813, 10)}
        <path d="M1541 595L1543 593V603L1541 605M1536 595V605" fill="none" stroke="#00e676"/>
        ${beam(669, 702, 479, 9)}
        <path d="M1011 711H1021L1109 797L1106 805z" fill="#008f4a" stroke="#00e676" stroke-width="1.500"/>
        ${beam(1106, 797, 500, 8)}
        <path d="M1148 797V805M1606 797L1611 794V803L1606 805" fill="none" stroke="#00e676"/>
        <path d="M1606 707L1603 796" stroke="#00e676"/>
        <path d="M1602 698H1615L1622 694V704L1615 707H1602zM1615 698V707" fill="#008f4a" stroke="#00e676"/>
        <!-- grips -->
        <g fill="none" stroke="#b4b4b4">
          <ellipse cx="1115" cy="581" rx="406" ry="400"/>
          <circle cx="1115" cy="181" r="30"/>
          <circle cx="1115" cy="994" r="30"/>
          <circle cx="708" cy="588" r="30"/>
          <circle cx="1521" cy="588" r="30"/>
        </g>
        <!-- triad -->
        <path d="M643 959V936" stroke="#0000ff" stroke-width="3"/>
        <path d="M643 926L647 940H639z" fill="#0000ff"/>
        <path d="M648 959H665" stroke="#00ff00" stroke-width="3"/>
        <path d="M675 959L662 955V963z" fill="#00ff00"/>
        <ellipse cx="643" cy="959" rx="5.500" ry="6.500" fill="#b00000"/>
        <text x="639" y="928" font-size="15" fill="#0000ff" font-family="Liberation Sans">Z</text>
        <text x="676" y="965" font-size="15" fill="#00ff00" font-family="Liberation Sans">Y</text>
      </svg>
      <div class="side">
        <gtj-icon name="orbit" size="20"></gtj-icon>
        <div class="gap"></div>
        <div class="two"><gtj-icon name="two" size="20"></gtj-icon><span>2D</span></div>
        <div class="gap s"></div>
        <gtj-icon name="cube" size="20"></gtj-icon><i></i>
        <gtj-icon name="cubeb" size="20"></gtj-icon><i></i>
        <gtj-icon name="frame" size="20"></gtj-icon>
        <div class="gap s"></div>
        <gtj-icon name="hexa" size="20"></gtj-icon>
        <hr>
        <gtj-icon name="listeye" size="20"></gtj-icon>
      </div>`;
  }
}
customElements.define('gtj-view', GtjView);

class GtjStatus extends HTMLElement {
  connectedCallback() {
    const btn = (n, w, drop, on) => `<span class="b${on ? ' on' : ''}" style="width:${w}px"><gtj-icon name="${n}" size="15"></gtj-icon>${drop ? '<i></i>' : ''}</span>`;
    this.attachShadow({ mode: 'open' }).innerHTML = `
      <style>
        :host { display: flex; height: 31px; align-items: center; background: #fbfbfb; color: #444; white-space: nowrap; }
        span.t { flex: none; }
        .b { flex: none; box-sizing: border-box; height: 25px; border: 1px solid #aaa; border-radius: 3px; background: #fff; display: flex; align-items: center; justify-content: center; gap: 3px; }
        .b.on { background: #d5e6fb; border-color: #2b7de0; }
        .b i { border: 2.500px solid transparent; border-top: 3.500px solid #555; border-bottom: 0; }
        .bs { display: flex; gap: 5px; margin-left: 0; }
      </style>
      <span class="t" style="width:265px;padding-left:2px;box-sizing:border-box;word-spacing:2px">X = 237874 Y = 29351 Z = -3864</span>
      <span class="t" style="width:40px">层高：</span><span class="t" style="width:43px">5.15</span>
      <span class="t" style="width:40px">标高：</span><span class="t" style="width:93px">1.6~6.75</span>
      <span class="t" style="width:102px">0</span>
      <span class="t" style="width:36px">隐藏：</span><span class="t" style="width:68px">0</span>
      <div class="bs">
        ${btn('s1', 24)}${btn('s2', 36, 1, 1)}${btn('s3', 25)}${btn('s4', 35, 1)}${btn('s5', 35, 1)}${btn('s6', 22)}${btn('s7', 24)}
      </div>
      <span class="t" style="margin-left:6px">按鼠标左键指定第一个角点，或拾取构件图元</span>`;
  }
}
customElements.define('gtj-status', GtjStatus);

class GtjTaskbar extends HTMLElement {
  connectedCallback() {
    this.attachShadow({ mode: 'open' }).innerHTML = `
      <style>
        :host { display: flex; height: 8px; overflow: hidden; background: linear-gradient(90deg, #2f2a2a 0, #3c3433 19%, #6f6a63 19.500%, #6f6a63 27.700%, #3d3836 28%, #54493f 60%, #47423c 70%, #2c3a3e 72%, #53483f 78%, #3f3534 100%); color: #fff; font-size: 11px; line-height: 16px; }
        span { display: block; margin-top: 1px; }
      </style>
      <span style="margin-left:1386px">50°F</span>
      <span style="margin-left:390px">11:16 周</span>`;
  }
}
customElements.define('gtj-taskbar', GtjTaskbar);

class GtjApp extends HTMLElement {
  connectedCallback() {
    this.attachShadow({ mode: 'open' }).innerHTML = `
      <style>
        :host { display: flex; flex-direction: column; width: 1920px; height: 1048px; overflow: hidden; }
        .main { flex: none; height: 843px; display: flex; background: #f4f4f4; }
        .nav { flex: none; width: 206px; }
        .mid { flex: none; width: 375px; margin-left: 9px; display: flex; flex-direction: column; gap: 7px; }
        .mid gtj-panel:first-child { flex: none; height: 527px; }
        .mid gtj-panel:last-child { flex: 1; }
        .gripl, .gripr { flex: none; display: flex; align-items: center; }
        .gripl { width: 4px; margin-left: 0; }
        .gripr { width: 3px; }
        .gripl i, .gripr i { display: block; width: 100%; height: 98px; background: #555; }
        .right { flex: none; width: 280px; border-right: 0; }
      </style>
      <gtj-titlebar></gtj-titlebar>
      <gtj-ribbon></gtj-ribbon>
      <gtj-selects></gtj-selects>
      <div class="main">
        <gtj-panel class="nav"><gtj-nav></gtj-nav></gtj-panel>
        <div class="mid">
          <gtj-panel><gtj-list></gtj-list></gtj-panel>
          <gtj-panel><gtj-props></gtj-props></gtj-panel>
        </div>
        <div class="gripl"><i></i></div>
        <gtj-view></gtj-view>
        <div class="gripr"><i></i></div>
        <gtj-panel class="right"><gtj-display></gtj-display></gtj-panel>
      </div>
      <gtj-status></gtj-status>
      <gtj-taskbar></gtj-taskbar>`;
  }
}
customElements.define('gtj-app', GtjApp);
</script>
</body>
</html>
